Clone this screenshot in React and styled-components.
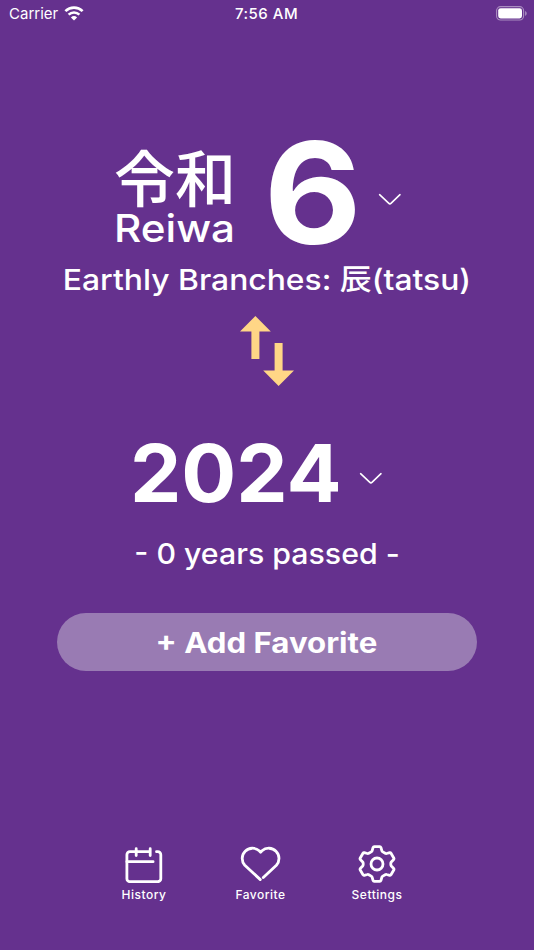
import React from 'react';
import styled, { createGlobalStyle } from 'styled-components';

export default function App() {
  return (
    <>
      <GlobalStyle />
      <Screen>
        <StatusBar>
          <Carrier>
            Carrier
            <WifiIcon />
          </Carrier>
          <Clock>7:56 AM</Clock>
          <BatteryIcon />
        </StatusBar>
        <EraPicker>
          <EraName>
            <Kanji>令和</Kanji>
            <Romaji stretch={1.11}>Reiwa</Romaji>
          </EraName>
          <EraYear stretch={1.07}>6</EraYear>
          <Chevron />
        </EraPicker>
        <Branch stretch={1.098}>Earthly Branches: 辰(tatsu)</Branch>
        <SwapIcon />
        <YearPicker>
          <Year stretch={1.02}>2024</Year>
          <Chevron />
        </YearPicker>
        <Passed stretch={1.045}>- 0 years passed -</Passed>
        <AddButton type="button">
          <ButtonLabel stretch={1.115}>+ Add Favorite</ButtonLabel>
        </AddButton>
        <TabBar>
          <Tab>
            <HistoryIcon />
            History
          </Tab>
          <Tab>
            <HeartIcon />
            Favorite
          </Tab>
          <Tab>
            <GearIcon />
            Settings
          </Tab>
        </TabBar>
      </Screen>
    </>
  );
}

function WifiIcon() {
  return (
    <svg width="20" height="15" viewBox="0 0 20 15" fill="none">
      <path d="M1.4 5.1a12.4 12.4 0 0 1 17.2 0" stroke="#fff" strokeWidth="2.7" />
      <path d="M4.6 8.6a7.8 7.8 0 0 1 10.8 0" stroke="#fff" strokeWidth="2.5" />
      <path d="M10 14.6 6.9 11.4a4.5 4.5 0 0 1 6.2 0z" fill="#fff" />
    </svg>
  );
}

function BatteryIcon() {
  return (
    <svg width="32" height="15" viewBox="0 0 32 15" fill="none">
      <rect x="0.6" y="0.6" width="27" height="13.4" rx="4" stroke="#fff" strokeOpacity="0.45" strokeWidth="1.1" />
      <rect x="2.2" y="2.2" width="23.8" height="10.2" rx="2.4" fill="#fff" />
      <path d="M29.2 5v4.8c1.9-.8 1.9-4 0-4.8z" fill="#fff" fillOpacity="0.5" />
    </svg>
  );
}

function Chevron() {
  return (
    <svg width="24" height="14" viewBox="0 0 24 14" fill="none">
      <path
        d="M1.6 1.7 10.6 10.2Q11.9 11.4 13.2 10.2L22 1.7"
        stroke="#fff"
        strokeWidth="1.6"
        strokeLinecap="round"
      />
    </svg>
  );
}

function SwapIcon() {
  return (
    <svg width="54" height="70" viewBox="0 0 54 70" fill="#ffd686">
      <path d="M15.4 0 30.8 15.6H19.4V43H11.4V15.6H0z" />
      <path d="M38.6 70 23.2 54.4H34.6V27H42.6V54.4H54z" />
    </svg>
  );
}

function HistoryIcon() {
  return (
    <svg width="38" height="38" viewBox="0.5 -1 38 38" {...line}>
      <path d="M11.7 5.7H5.4a3 3 0 0 0-3 3v24a3 3 0 0 0 3 3h27.9a3 3 0 0 0 3-3v-24a3 3 0 0 0-3-3h-1.3" />
      <path d="M11.7 5.7h14M11.7 2.7v6.8M25.7 2.7v6.8M2.4 15.7h26.2" />
    </svg>
  );
}

function HeartIcon() {
  return (
    <svg width="42" height="38" viewBox="0.5 -1 42 38" {...line}>
      <path d="M20.8 33.6 5.3 19.2A10.2 10.2 0 0 1 19.7 4.8L21.1 6.2 22.5 4.8A10.2 10.2 0 0 1 36.9 19.2L23.8 31.6" />
    </svg>
  );
}

function GearIcon() {
  return (
    <svg width="40" height="38" viewBox="0 0 40 38" {...line}>
      <path d="M17.2 1.6H22.8Q23.6 1.6 23.9 2.4L24.9 5.8Q25.1 6.5 25.8 6.9L28.2 8.3Q28.9 8.7 29.6 8.5L32.7 7.7Q33.6 7.5 34 8.3L36.9 13.2Q37.3 13.9 36.7 14.5L34.3 17Q33.8 17.6 33.8 18.4V19.6Q33.8 20.4 34.3 21L36.7 23.5Q37.3 24.1 36.9 24.8L34 29.7Q33.6 30.5 32.7 30.3L29.6 29.5Q28.9 29.3 28.2 29.7L25.8 31.1Q25.1 31.5 24.9 32.2L23.9 35.6Q23.6 36.4 22.8 36.4H17.2Q16.4 36.4 16.1 35.6L15.1 32.2Q14.9 31.5 14.2 31.1L11.8 29.7Q11.1 29.3 10.4 29.5L7.3 30.3Q6.4 30.5 6 29.7L3.1 24.8Q2.7 24.1 3.3 23.5L5.7 21Q6.2 20.4 6.2 19.6V18.4Q6.2 17.6 5.7 17L3.3 14.5Q2.7 13.9 3.1 13.2L6 8.3Q6.4 7.5 7.3 7.7L10.4 8.5Q11.1 8.7 11.8 8.3L14.2 6.9Q14.9 6.5 15.1 5.8L16.1 2.4Q16.4 1.6 17.2 1.6Z" />
      <circle cx="20" cy="19" r="6" />
    </svg>
  );
}

const line = {
  fill: 'none',
  stroke: '#fff',
  strokeWidth: 2.8,
  strokeLinecap: 'round',
  strokeLinejoin: 'round',
};

const GlobalStyle = createGlobalStyle`
  body {
    margin: 0;
    background: #65318e;
  }
  svg {
    display: block;
    flex: none;
  }
`;

// Component Styles
const Screen = styled.main`
  height: 950px;
  display: flex;
  flex-direction: column;
  align-items: center;
  overflow: hidden;
  background: #65318e;
  color: #fff;
  font-family: Inter, 'Noto Sans CJK JP', sans-serif;
  white-space: nowrap;
`;

const WideText = styled.div.withConfig({
  shouldForwardProp: prop => prop !== 'stretch',
})`
  transform: scaleX(${props => props.stretch});
`;

const StatusBar = styled.header`
  align-self: stretch;
  display: grid;
  grid-template-columns: 1fr auto 1fr;
  align-items: center;
  height: 27px;
  padding: 0 6px 0 9px;
  font-size: 15px;
  > svg {
    justify-self: end;
  }
`;

const Carrier = styled.div`
  display: flex;
  align-items: center;
  gap: 6px;
`;

const Clock = styled.time`
  margin-right: 4px;
  font-weight: 500;
  letter-spacing: 0.5px;
`;

const EraPicker = styled.section`
  display: flex;
  align-items: center;
  height: 120px;
  margin: 106px 18px 0 0;
  > svg {
    margin: 14px 0 0 20px;
  }
`;

const EraName = styled.div`
  width: 122px;
  display: flex;
  flex-direction: column;
  align-items: center;
  margin-top: 6px;
`;

const Kanji = styled.div`
  font: 500 61px/60px 'Noto Sans CJK JP', sans-serif;
`;

const Romaji = styled(WideText)`
  margin-top: 3px;
  font-size: 38px;
  font-weight: 500;
  line-height: 38px;
`;

const EraYear = styled(WideText)`
  width: 90px;
  margin-left: 31px;
  font-size: 141px;
  font-weight: 700;
  line-height: 120px;
  text-align: center;
  + svg {
    margin-left: 21px;
  }
`;

const Branch = styled(WideText)`
  margin-top: 7px;
  font-size: 29px;
  font-weight: 500;
  line-height: 40px;
  + svg {
    margin-top: 16px;
  }
`;

const YearPicker = styled.section`
  display: flex;
  align-items: center;
  gap: 20px;
  height: 80px;
  margin: 47px 19px 0 0;
  > svg {
    margin-top: 11px;
  }
`;

const Year = styled(WideText)`
  font-size: 80px;
  font-weight: 700;
  line-height: 80px;
`;

const Passed = styled(WideText)`
  margin-top: 21px;
  font-size: 29px;
  font-weight: 500;
  line-height: 40px;
`;

const AddButton = styled.button`
  width: 420px;
  height: 58px;
  margin-top: 39px;
  padding: 0;
  border: 0;
  border-radius: 29px;
  background: #997bb3;
  color: inherit;
  font: 700 28px/58px Inter, sans-serif;
`;

const ButtonLabel = styled(WideText).attrs({ as: 'span' })`
  display: block;
  padding: 1px 1px 0 0;
`;

const TabBar = styled.nav`
  display: flex;
  margin: 174px 13px 0 0;
`;

const Tab = styled.a`
  width: 116.5px;
  display: flex;
  flex-direction: column;
  align-items: center;
  gap: 3px;
  font-size: 12px;
  font-weight: 500;
  line-height: 18px;
  letter-spacing: 0.5px;
`;
